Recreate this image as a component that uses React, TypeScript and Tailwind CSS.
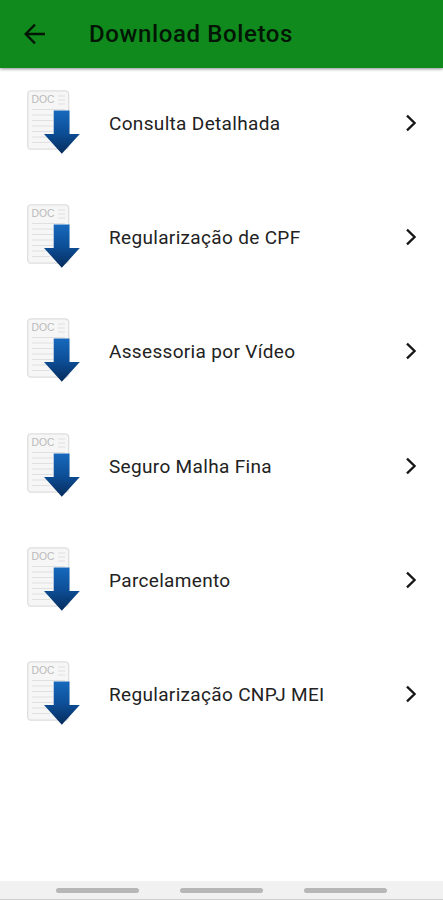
const items = [
  'Consulta Detalhada',
  'Regularização de CPF',
  'Assessoria por Vídeo',
  'Seguro Malha Fina',
  'Parcelamento',
  'Regularização CNPJ MEI',
];

function BackIcon() {
  return (
    <svg width="22" height="22" viewBox="0 0 22 22" fill="none" stroke="#031605" strokeWidth="2.3" className="block">
      <path d="M21 11H2M11 1.6L1.6 11l9.4 9.4" />
    </svg>
  );
}

function DocIcon() {
  return (
    <svg width="54" height="64" viewBox="0 0 54 64" className="block shrink-0">
      <defs>
        <linearGradient id="arrow" x1="0" y1="0" x2="0" y2="1">
          <stop offset="0" stopColor="#1769bd" />
          <stop offset="0.5" stopColor="#0d4f98" />
          <stop offset="1" stopColor="#062c5c" />
        </linearGradient>
      </defs>
      <rect x="0.7" y="0.8" width="41" height="58.4" rx="3.5" fill="#f6f6f6" stroke="#dedede" strokeWidth="1.3" />
      <text x="4.5" y="13" fontSize="10" textLength="23" lengthAdjust="spacingAndGlyphs" fill="#bababa" className="font-['Liberation_Sans',sans-serif]">
        DOC
      </text>
      <path
        d="M31 6h7M31 10h7M31 14h7M5 19.5h33M5 25h21M5 30.5h21M5 36h21M5 41.5h21M5 47h15M5 52.5h18"
        stroke="#e0e0e0"
        strokeWidth="1.2"
      />
      <path d="M26.7 20.5H42.5V44H52.8L34.8 63.8L17 44H26.7Z" fill="url(#arrow)" />
    </svg>
  );
}

function Chevron() {
  return (
    <svg width="12" height="18" viewBox="0 0 12 18" fill="none" stroke="#161616" strokeWidth="2.3" className="mt-[2px] block">
      <path d="M2 1.6L9.6 9L2 16.4" />
    </svg>
  );
}

export default function App() {
  return (
    <div className="flex h-[900px] w-[443px] flex-col overflow-hidden bg-white font-['Roboto',sans-serif]">
      <header className="z-10 flex h-[68px] shrink-0 items-center bg-[#108a1c] pl-6 shadow-[0_1px_3px_rgba(0,0,0,0.45)]">
        <BackIcon />
        <h1 className="ml-[43px] text-[24px] leading-none font-medium tracking-[0.62px] whitespace-nowrap text-[#031605]">
          Download Boletos
        </h1>
      </header>
      <ul className="flex flex-1 flex-col gap-[50.2px] pt-[22px]">
        {items.map((label) => (
          <li key={label} className="flex h-16 items-center pr-[26px] pl-[27px]">
            <DocIcon />
            <span className="ml-7 flex-1 pt-[3px] text-[19px] leading-none tracking-[0.33px] whitespace-nowrap text-[#222]">
              {label}
            </span>
            <Chevron />
          </li>
        ))}
      </ul>
      <nav className="flex h-[19px] shrink-0 items-center justify-center gap-[41px] border-b border-[#cfcfcf] bg-[#f1f1f1]">
        <span className="h-[5px] w-[83px] rounded-full bg-[#b7b7b7]" />
        <span className="h-[5px] w-[83px] rounded-full bg-[#b7b7b7]" />
        <span className="h-[5px] w-[83px] rounded-full bg-[#b7b7b7]" />
      </nav>
    </div>
  );
}
